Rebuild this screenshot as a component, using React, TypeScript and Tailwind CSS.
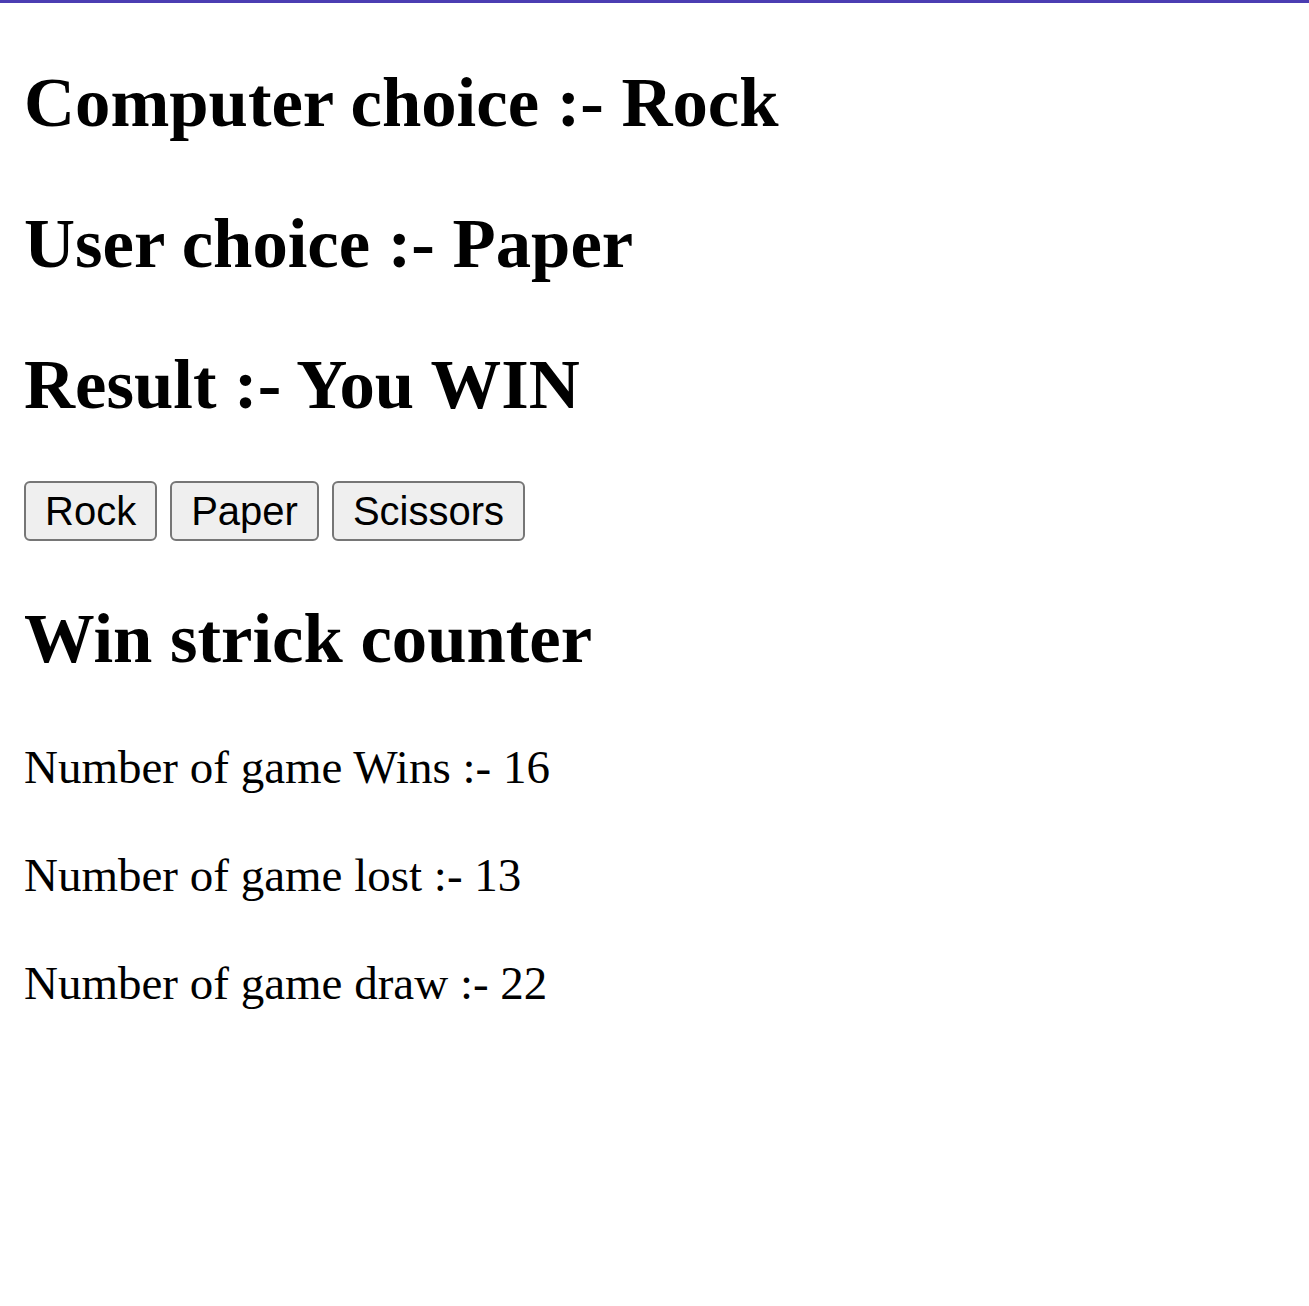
import React from "react";

export default function App() {
  const heading = "m-0 text-[70.7px] font-bold leading-[82px] font-['Liberation_Serif',serif] text-black";
  const para = "m-0 text-[47px] leading-[54px] font-['Liberation_Serif',serif] text-black";
  const btn =
    "h-[60px] px-[19px] bg-[#efefef] border-2 border-solid border-[#767676] rounded-[6px] text-[40px] leading-[46px] font-['Liberation_Sans',Arial,sans-serif] text-black";
  return (
    <div className="min-h-screen bg-white">
      <div className="h-[3px] bg-[#4b3db2]" />
      <div className="px-[24px] flex flex-col items-start">
        <h2 className={`${heading} mt-[58px]`}>Computer choice :- Rock</h2>
        <h2 className={`${heading} mt-[59px]`}>User choice :- Paper</h2>
        <h2 className={`${heading} mt-[59px]`}>Result :- You WIN</h2>
        <div className="mt-[56px] flex gap-[13px]">
          <button className={btn}>Rock</button>
          <button className={btn}>Paper</button>
          <button className={btn}>Scissors</button>
        </div>
        <h2 className={`${heading} mt-[56px]`}>Win strick counter</h2>
        <p className={`${para} mt-[61px]`}>Number of game Wins :- 16</p>
        <p className={`${para} mt-[54px]`}>Number of game lost :- 13</p>
        <p className={`${para} mt-[54px]`}>Number of game draw :- 22</p>
      </div>
    </div>
  );
}
